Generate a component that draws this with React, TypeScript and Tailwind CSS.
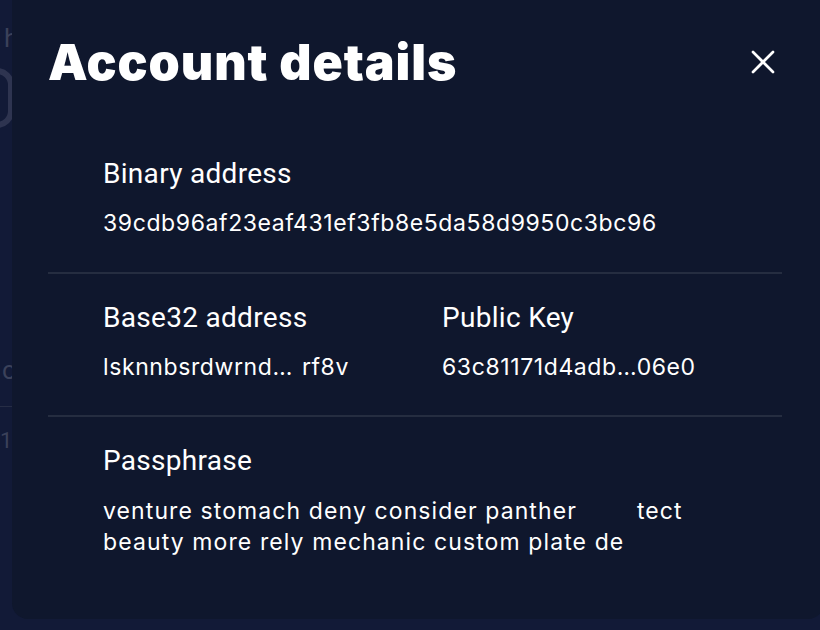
import { X } from "lucide-react";

const label = "text-[28px] leading-[32px] tracking-[0.3px] text-white font-['Roboto',sans-serif]";
const value = "mt-[18px] text-[23px] leading-[31px] tracking-[0.6px] text-white font-['Inter',sans-serif]";

export default function App() {
  return (
    <div className="relative h-[630px] w-[820px] overflow-hidden bg-[#121a37]">
      {/* page behind the dialog */}
      <div className="flex flex-col pt-[22px] font-['Roboto',sans-serif] text-[#3b415a]">
        <div className="pl-[4px] text-[26px] leading-[32px]">h</div>
        <div className="mt-[14px] -ml-[20px] h-[60px] w-[34px] rounded-full border-[6px] border-[#2e3450]" />
        <div className="mt-[226px] pl-[2px] text-[26px] leading-[32px]">c</div>
        <div className="mt-[20px] h-px w-[12px] bg-[#262d45]" />
        <div className="mt-[20px] text-[22px] leading-[28px]">11</div>
      </div>

      {/* dialog */}
      <div className="absolute left-[12px] right-[-4px] top-[-20px] bottom-[11px] rounded-2xl bg-[#0f172d] pl-[36px] pr-[42px] pt-[54px]">
        <div className="flex items-start justify-between">
          <h1 className="font-['Inter',sans-serif] text-[50px] font-black leading-[56px] tracking-[0.9px] text-white">
            Account details
          </h1>
          <button className="-mr-px mt-[8px] text-white">
            <X size={40} strokeWidth={1.6} />
          </button>
        </div>

        <div className="mt-[68px] pl-[55px] pb-[33px]">
          <div className={label}>Binary address</div>
          <div className={value}>39cdb96af23eaf431ef3fb8e5da58d9950c3bc96</div>
        </div>
        <div className="h-[2px] bg-[#252d40]" />

        <div className="grid grid-cols-[339px_1fr] pl-[55px] pt-[28px] pb-[32px]">
          <div>
            <div className={label}>Base32 address</div>
            <div className={value}>
              lsknnbsrdwrnd…<span className="inline-block w-[9px]" />rf8v
            </div>
          </div>
          <div>
            <div className={label}>Public Key</div>
            <div className={value}>63c81171d4adb…06e0</div>
          </div>
        </div>
        <div className="h-[2px] bg-[#252d40]" />

        <div className="pl-[55px] pt-[28px]">
          <div className={label}>Passphrase</div>
          <div className="mt-[19px] text-[23px] leading-[31px] tracking-[1.1px] text-white font-['Inter',sans-serif]">
            venture stomach deny consider panther
            <span className="inline-block w-[60px]" />
            tect
            <br />
            beauty more rely mechanic custom plate de
          </div>
        </div>
      </div>
    </div>
  );
}
